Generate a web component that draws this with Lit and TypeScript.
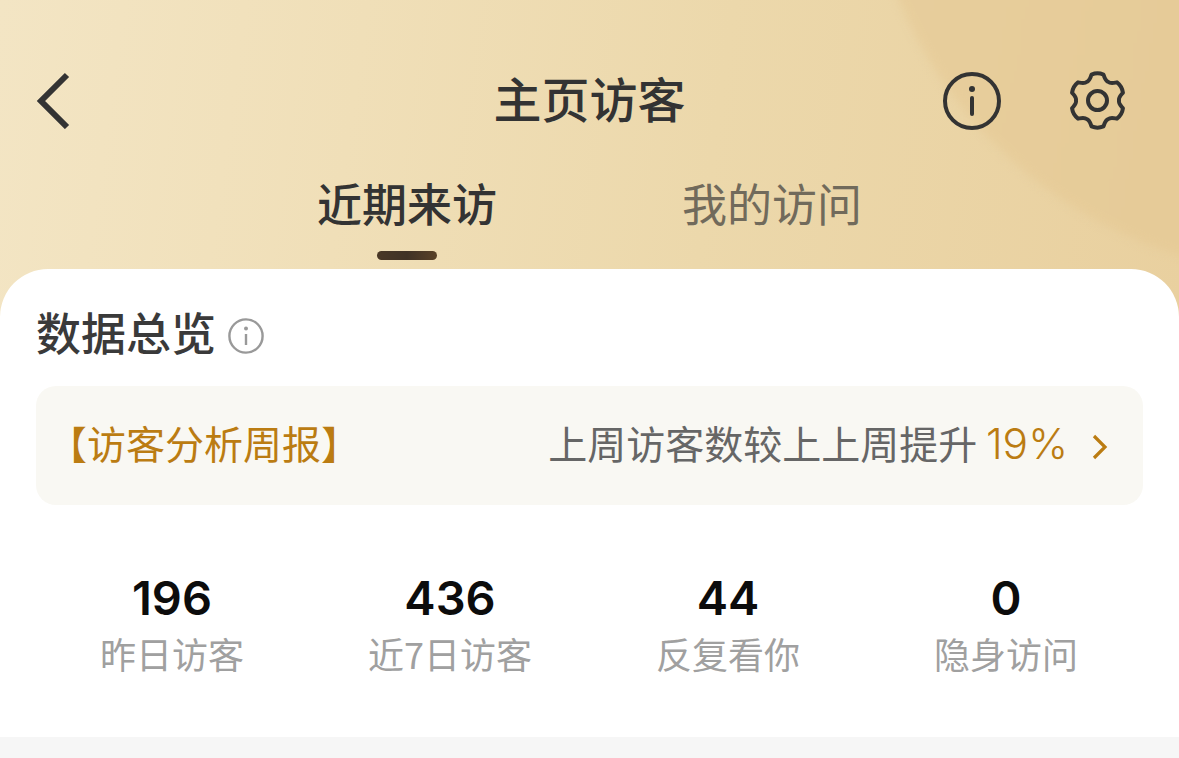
import { css, html, LitElement } from 'lit'
import { customElement } from 'lit/decorators.js'

const stats = [
  { value: '196', label: '昨日访客' },
  { value: '436', label: '近7日访客' },
  { value: '44', label: '反复看你' },
  { value: '0', label: '隐身访问' },
]

// six lobed gear outline, centred in a 60 box
function gearPath() {
  const pt = (deg: number, r: number) => {
    const a = (deg * Math.PI) / 180
    return `${(30 + r * Math.cos(a)).toFixed(2)} ${(30 + r * Math.sin(a)).toFixed(2)}`
  }
  let d = ''
  for (let i = 0; i < 6; i++) {
    const a = -90 + i * 60
    d += `${i === 0 ? 'M' : 'L'}${pt(a - 13, 26.6)} `
    d += `Q${pt(a, 28.4)} ${pt(a + 13, 26.6)} `
    d += `C${pt(a + 18, 23.5)} ${pt(a + 22, 21)} ${pt(a + 30, 21.5)} `
    d += `C${pt(a + 38, 21)} ${pt(a + 42, 23.5)} ${pt(a + 47, 26.6)} `
  }
  return d + 'Z'
}

@customElement('app-root')
export class AppRoot extends LitElement {
  static styles = css`
    :host {
      display: block;
      width: 1179px;
      height: 758px;
      overflow: hidden;
      background: #f6f6f6;
      font-family: "Noto Sans CJK SC", "Inter", sans-serif;
      color: #333;
    }

    .head {
      position: relative;
      height: 317px;
      margin-bottom: -48px;
      overflow: hidden;
      background: linear-gradient(98deg, #f3e5c4 0%, #f0dfb8 30%, #ecd8ab 60%, #e9d09f 100%);
    }

    .swoosh {
      position: absolute;
      left: 865px;
      top: -615px;
      width: 890px;
      height: 890px;
      border-radius: 50%;
      background: linear-gradient(100deg, #e8cf9e, #e4c690);
      filter: blur(4px);
    }

    .nav {
      position: relative;
      display: flex;
      align-items: center;
      height: 58px;
      margin-top: 71px;
      padding: 0 52px 0 36px;
    }

    .nav-title {
      position: absolute;
      left: 0;
      right: 0;
      top: -3px;
      text-align: center;
      font-size: 48px;
      line-height: 58px;
      font-weight: 500;
    }

    .back { width: 36px; height: 58px; }
    .nav-icons { margin-left: auto; display: flex; gap: 66px; }
    .nav-icons svg { display: block; width: 60px; height: 60px; overflow: visible; }

    .tabs {
      position: relative;
      display: flex;
      justify-content: center;
      gap: 185px;
      margin-top: 46px;
    }

    .tab {
      display: flex;
      flex-direction: column;
      align-items: center;
      font-size: 45px;
      line-height: 56px;
      color: #716a5b;
    }

    .tab.on { color: #333; font-weight: 500; }
    .tab i {
      display: block;
      width: 60px;
      height: 9px;
      margin-top: 20px;
      border-radius: 5px;
    }
    .tab.on i { background: linear-gradient(90deg, #4a3826, #3f3226 50%, #5a4228); }

    .card {
      position: relative;
      height: 468px;
      box-sizing: border-box;
      padding: 33px 36px 0;
      background: #fff;
      border-radius: 48px 48px 0 0;
    }

    .card-title {
      display: flex;
      align-items: center;
      gap: 11px;
      height: 60px;
      font-size: 45px;
      font-weight: 500;
      color: #3a3a3a;
    }
    .card-title span { margin-top: -1px; }
    .card-title svg { width: 38px; height: 38px; margin-top: 8px; }

    .notice {
      display: flex;
      align-items: center;
      height: 119px;
      margin-top: 24px;
      padding: 0 34px 0 12px;
      background: #f9f8f3;
      border-radius: 20px;
      font-size: 39px;
      color: #666;
    }

    .notice .tag { color: #bb7c12; padding-bottom: 8px; }
    .notice .msg { margin-left: auto; padding-bottom: 8px; }
    .notice .pct {
      color: #bb7c12;
      font-family: "Inter", sans-serif;
      font-size: 42.5px;
      font-weight: 300;
    }
    .notice svg { width: 18px; height: 28px; margin: 3px 0 0 23px; }

    .stats {
      display: grid;
      grid-template-columns: repeat(4, 278px);
      margin: 64px 0 0 -3px;
      text-align: center;
    }

    .num {
      font-family: "Inter", sans-serif;
      font-size: 47px;
      line-height: 58px;
      font-weight: 600;
      color: #0c0c0c;
    }

    .label {
      font-size: 36px;
      line-height: 52px;
      color: #a0a0a0;
    }
  `

  render() {
    return html`
      <div class="head">
        <div class="swoosh"></div>
        <div class="nav">
          <svg class="back" viewBox="0 0 36 58" fill="none" stroke="#333" stroke-width="6">
            <path d="M31 4 L5 30 L31 56" />
          </svg>
          <div class="nav-title">主页访客</div>
          <div class="nav-icons">
            <svg viewBox="0 0 60 60" fill="none" stroke="#333" stroke-width="4">
              <circle cx="31" cy="31" r="27" />
              <circle cx="31" cy="19" r="3" fill="#333" stroke="none" />
              <path d="M31 28 V44" stroke-linecap="round" />
            </svg>
            <svg viewBox="0 0 60 60" fill="none" stroke="#333" stroke-width="4" stroke-linejoin="round">
              <g transform="translate(0.5 0.5)">
                <path d=${gearPath()} />
                <circle cx="30" cy="30" r="9.5" />
              </g>
            </svg>
          </div>
        </div>
        <div class="tabs">
          <div class="tab on">近期来访<i></i></div>
          <div class="tab">我的访问<i></i></div>
        </div>
      </div>
      <div class="card">
        <div class="card-title">
          <span>数据总览</span>
          <svg viewBox="0 0 38 38" fill="none" stroke="#999" stroke-width="2.4">
            <circle cx="19" cy="19" r="16.6" />
            <circle cx="19" cy="11.5" r="2" fill="#999" stroke="none" />
            <path d="M19 17 V28" />
          </svg>
        </div>
        <div class="notice">
          <span class="tag">【访客分析周报】</span>
          <span class="msg">上周访客数较上上周提升 <span class="pct">19%</span></span>
          <svg viewBox="0 0 18 28" fill="none" stroke="#bb7c12" stroke-width="3.2">
            <path d="M3 3 L14 14 L3 25" />
          </svg>
        </div>
        <div class="stats">
          ${stats.map(s => html`
            <div>
              <div class="num">${s.value}</div>
              <div class="label">${s.label}</div>
            </div>
          `)}
        </div>
      </div>
    `
  }
}
